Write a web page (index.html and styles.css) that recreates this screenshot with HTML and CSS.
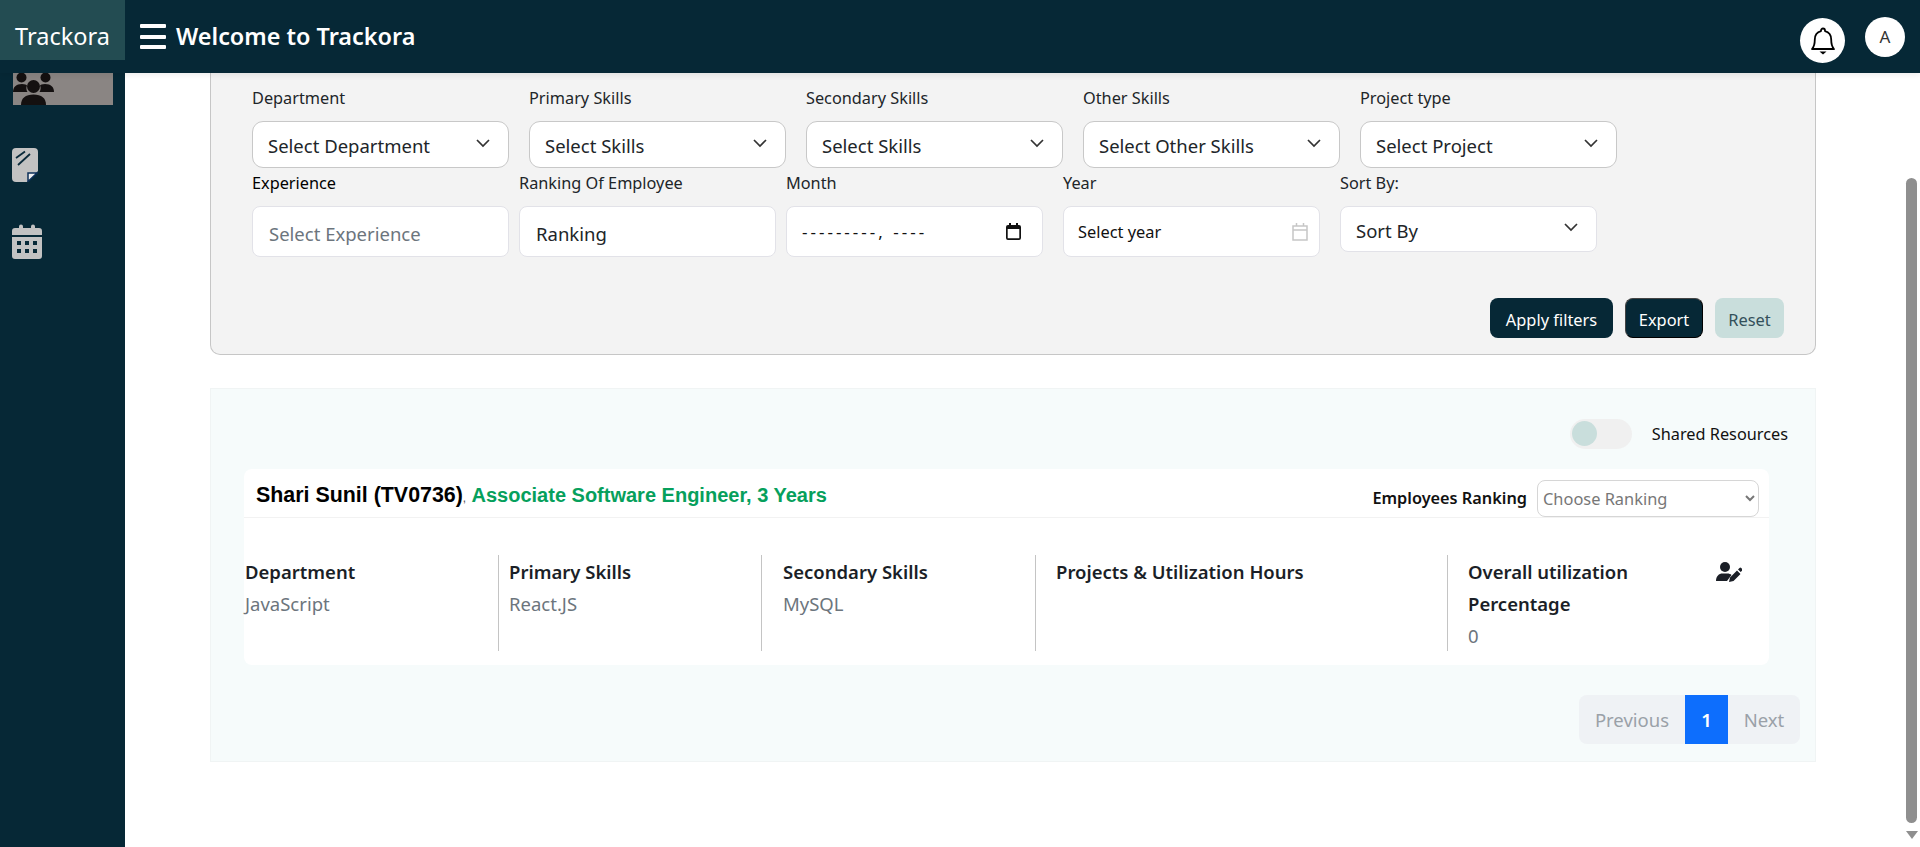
FILE: index.html
```html
<!DOCTYPE html>
<html>
	<head>
		<meta charset="utf-8">
		<title>Trackora</title>
		<link rel="stylesheet" href="styles.css">
	</head>
	<body>
		<div class="app">
			<!-- top bar -->
			<header class="topbar">
				<div class="brand">Trackora</div>
				<div class="hamburger"><span></span><span></span><span></span></div>
				<div class="welcome">Welcome to Trackora</div>
				<div class="bell">
					<svg width="26" height="30" viewBox="0 0 26 30"><path d="M13 2.500a2 2 0 0 1 2 2v.6c4 1 6.200 4.300 6.200 8.400 0 4.500.6 7.200 2.800 9.500H2c2.200-2.300 2.800-5 2.800-9.500 0-4.100 2.200-7.400 6.200-8.400v-.6a2 2 0 0 1 2-2z" fill="none" stroke="#000" stroke-width="1.800" stroke-linejoin="round"/><path d="M9.500 25.500h7L13 28.500z" fill="#000"/></svg>
				</div>
				<div class="avatar">A</div>
			</header>

			<div class="below">
				<!-- left menu -->
				<nav class="sidebar">
					<div class="nav-active">
						<svg width="42" height="32" viewBox="0 0 42 32" fill="#141010"><circle cx="8.500" cy="4.500" r="5"/><circle cx="32.500" cy="4.500" r="5"/><path d="M0 19c0-5 3-8 9-8 3 0 4.500.8 5 1.500-1 2-.8 4.500.5 6.500z"/><path d="M41 19c0-5-3-8-9-8-3 0-4.500.8-5 1.500 1 2 .8 4.500-.5 6.500z"/><circle cx="20.500" cy="13.500" r="6.500"/><path d="M8 32c0-7 4.500-10.500 12.500-10.500S33 25 33 32z"/></svg>
					</div>
					<div class="nav-doc">
						<svg width="26" height="34" viewBox="0 0 26 34"><path d="M4 0h18a4 4 0 0 1 4 4v19L15 34H4a4 4 0 0 1-4-4V4a4 4 0 0 1 4-4z" fill="#c2c2c2"/><path d="M16 33.500V25h9z" fill="#eee" stroke="#0b2f5a" stroke-width="1.500"/><path d="M4 10 13 3.500M6 17 18 6" stroke="#0a2a3a" stroke-width="1.800" fill="none"/></svg>
					</div>
					<div class="nav-cal">
						<svg width="30" height="35" viewBox="0 0 30 35" fill="#c2c2c2"><path d="M7 2.500a2 2 0 0 1 4 0V4h8V2.500a2 2 0 0 1 4 0V4h4a3 3 0 0 1 3 3v4H0V7a3 3 0 0 1 3-3h4z"/><path fill-rule="evenodd" d="M0 13h30v19a3 3 0 0 1-3 3H3a3 3 0 0 1-3-3zM5 17v4h4v-4zm8 0v4h4v-4zm8 0v4h4v-4zM5 25v4h4v-4zm8 0v4h4v-4zm8 0v4h4v-4z"/></svg>
					</div>
				</nav>

				<main class="content">
					<!-- filters -->
					<section class="filters">
						<div class="filter-row">
							<div class="field field-wide">
								<label>Department</label>
								<div class="pick">Select Department <svg class="chev" width="14" height="9" viewBox="0 0 14 9"><path d="M1 1l6 6 6-6" fill="none" stroke="#333" stroke-width="1.700"/></svg></div>
							</div>
							<div class="field field-wide">
								<label>Primary Skills</label>
								<div class="pick">Select Skills <svg class="chev" width="14" height="9" viewBox="0 0 14 9"><path d="M1 1l6 6 6-6" fill="none" stroke="#333" stroke-width="1.700"/></svg></div>
							</div>
							<div class="field field-wide">
								<label>Secondary Skills</label>
								<div class="pick">Select Skills <svg class="chev" width="14" height="9" viewBox="0 0 14 9"><path d="M1 1l6 6 6-6" fill="none" stroke="#333" stroke-width="1.700"/></svg></div>
							</div>
							<div class="field field-wide">
								<label>Other Skills</label>
								<div class="pick">Select Other Skills <svg class="chev" width="14" height="9" viewBox="0 0 14 9"><path d="M1 1l6 6 6-6" fill="none" stroke="#333" stroke-width="1.700"/></svg></div>
							</div>
							<div class="field">
								<label>Project type</label>
								<div class="pick">Select Project <svg class="chev" width="14" height="9" viewBox="0 0 14 9"><path d="M1 1l6 6 6-6" fill="none" stroke="#333" stroke-width="1.700"/></svg></div>
							</div>
						</div>
						<div class="filter-row filter-row-two">
							<div class="field field-near">
								<label class="label-dark">Experience</label>
								<input class="box" type="text" placeholder="Select Experience">
							</div>
							<div class="field field-near">
								<label>Ranking Of Employee</label>
								<input class="box" type="text" value="Ranking">
							</div>
							<div class="field field-wide">
								<label>Month</label>
								<div class="box box-month"><span class="month-text">---------, ----</span>
									<svg width="15" height="17" viewBox="0 0 15 17"><path d="M3 0h2v2h5V0h2v2h1a2 2 0 0 1 2 2v11a2 2 0 0 1-2 2H2a2 2 0 0 1-2-2V4a2 2 0 0 1 2-2h1zM1.700 6v9a.3.3 0 0 0 .3.3h11a.3.3 0 0 0 .3-.3V6z" fill="#111"/></svg>
								</div>
							</div>
							<div class="field field-wide">
								<label>Year</label>
								<div class="box box-year">Select year
									<svg width="16" height="18" viewBox="0 0 16 18" fill="none" stroke="#c6c6c6" stroke-width="1.500"><rect x="1" y="3" width="14" height="14"/><path d="M1 7h14M4.500 0v3M11.500 0v3"/></svg>
								</div>
							</div>
							<div class="field">
								<label>Sort By:</label>
								<div class="pick pick-sort">Sort By <svg class="chev" width="14" height="9" viewBox="0 0 14 9"><path d="M1 1l6 6 6-6" fill="none" stroke="#333" stroke-width="1.700"/></svg></div>
							</div>
						</div>
						<div class="filter-actions">
							<button class="btn btn-dark">Apply filters</button>
							<button class="btn btn-dark btn-export">Export</button>
							<button class="btn btn-reset">Reset</button>
						</div>
					</section>

					<!-- results -->
					<section class="results">
						<div class="shared">
							<div class="toggle"><span></span></div>
							<div>Shared Resources</div>
						</div>
						<div class="card">
							<div class="card-head">
								<div class="emp-name">Shari Sunil (TV0736)<span class="comma">, </span><span class="emp-role">Associate Software Engineer, 3 Years</span></div>
								<div class="emp-rank">
									<b>Employees Ranking</b>
									<select class="rank-select"><option>Choose Ranking</option></select>
								</div>
							</div>
							<div class="card-body">
								<div class="col col-1">
									<div class="col-title">Department</div>
									<div class="col-value">JavaScript</div>
								</div>
								<div class="col col-2">
									<div class="col-title">Primary Skills</div>
									<div class="col-value">React.JS</div>
								</div>
								<div class="col col-3">
									<div class="col-title">Secondary Skills</div>
									<div class="col-value">MySQL</div>
								</div>
								<div class="col col-4">
									<div class="col-title">Projects &amp; Utilization Hours</div>
								</div>
								<div class="col col-5">
									<div>
										<div class="col-title">Overall utilization Percentage</div>
										<div class="col-value">0</div>
									</div>
									<svg class="edit-user" width="26" height="20" viewBox="0 0 26 20" fill="#1b1f27"><circle cx="9" cy="5" r="5"/><path d="M0 19c0-5 3-7.500 6.500-7.500h5c1.500 0 3 .5 4 1.500L11 19z"/><path d="M13 20l1-4.500 7-7 3.500 3.500-7 7zM22 7.500l1.500-1.500a1.200 1.200 0 0 1 1.700 0l1 1a1.200 1.200 0 0 1 0 1.700L24.700 10z"/></svg>
								</div>
							</div>
						</div>
						<div class="pagination">
							<div class="page page-prev">Previous</div>
							<div class="page page-on">1</div>
							<div class="page page-next">Next</div>
						</div>
					</section>
				</main>

				<!-- page scrollbar -->
				<div class="scrollbar">
					<div class="scroll-thumb"></div>
					<div class="scroll-arrow"></div>
				</div>
			</div>
		</div>
	</body>
</html>
```

FILE: styles.css
```css
* {
	padding: 0;
	margin: 0;
	box-sizing: border-box;
}
body {
	font-family: "Noto Sans", "Open Sans", sans-serif;
	font-size: 16px;
	color: #212529;
	background-color: #ffffff;
}
.app {
	height: 847px;
	overflow: hidden;
	display: flex;
	flex-direction: column;
}

/* top bar */
.topbar {
	height: 73px;
	flex: none;
	background-color: #062836;
	display: flex;
	align-items: center;
	color: #ffffff;
	box-shadow: 0 2px 6px rgba(0, 0, 0, 0.08);
	position: relative;
	z-index: 2;
}
.brand {
	width: 125px;
	height: 60px;
	align-self: flex-start;
	background-color: #234c52;
	font-size: 23.500px;
	line-height: 72px;
	text-align: center;
}
.hamburger {
	width: 26px;
	margin-left: 15px;
	margin-right: 10px;
	display: flex;
	flex-direction: column;
	gap: 6.500px;
}
.hamburger span {
	height: 4px;
	background-color: #ffffff;
	border-radius: 1px;
}
.welcome {
	font-size: 23.400px;
	font-weight: 600;
	flex: 1;
	margin-bottom: 2px;
}
.bell {
	width: 45px;
	height: 45px;
	border-radius: 50%;
	background-color: #ffffff;
	display: flex;
	align-items: center;
	justify-content: center;
	margin-right: 20px;
	margin-top: 8px;
}
.avatar {
	width: 40px;
	height: 40px;
	border-radius: 50%;
	background-color: #ffffff;
	color: #333333;
	font-size: 17px;
	line-height: 40px;
	text-align: center;
	margin-right: 15px;
}

/* layout under the bar */
.below {
	flex: 1;
	display: flex;
	min-height: 0;
}
.sidebar {
	width: 125px;
	flex: none;
	background-color: #062836;
}
.nav-active {
	width: 100px;
	height: 32px;
	margin-left: 13px;
	background-color: #8a8583;
	overflow: hidden;
}
.nav-doc {
	margin: 43px 0 0 12px;
	height: 34px;
}
.nav-cal {
	margin: 42px 0 0 12px;
}
.content {
	flex: 1;
	min-width: 0;
	padding: 0 87px 0 85px;
}
.scrollbar {
	width: 17px;
	flex: none;
	background-color: #ffffff;
	padding-top: 105px;
	display: flex;
	flex-direction: column;
	align-items: center;
}
.scroll-thumb {
	width: 11px;
	height: 645px;
	background-color: #8f8f8f;
	border-radius: 6px;
}
.scroll-arrow {
	margin-top: 8px;
	border-left: 6px solid transparent;
	border-right: 6px solid transparent;
	border-top: 8px solid #8f8f8f;
}

/* filter panel */
.filters {
	background-color: #f3f3f3;
	border: 1px solid #c6c6c6;
	border-top: 0;
	border-radius: 0 0 10px 10px;
	padding: 13px 31px 16px 41px;
}
.filter-row {
	display: flex;
}
.filter-row-two {
	margin-top: 3px;
}
.field {
	width: 257px;
	flex: none;
}
.field-wide {
	margin-right: 20px;
}
.field-near {
	margin-right: 10px;
}
.field label {
	display: block;
	font-size: 16.300px;
	line-height: 24px;
	margin-bottom: 11px;
	color: #212529;
}
.field .label-dark {
	color: #000000;
}
.pick {
	height: 47px;
	background-color: #ffffff;
	border: 1px solid #c8c8c8;
	border-radius: 11px;
	padding: 2px 18px 0 15px;
	font-size: 18.500px;
	display: flex;
	align-items: center;
	justify-content: space-between;
}
.chev {
	margin-top: -5px;
}
.pick-sort {
	height: 46px;
	border-color: #e2e2e8;
	border-radius: 8px;
}
.box {
	display: block;
	width: 100%;
	height: 51px;
	background-color: #ffffff;
	border: 1px solid #e2e2e8;
	border-radius: 8px;
	padding: 3px 16px 0;
	font-family: inherit;
	font-size: 18.500px;
	color: #212529;
	outline: none;
}
.box::placeholder {
	color: #6c757d;
}
.box-month {
	font-size: 17px;
	color: #111111;
	display: flex;
	align-items: center;
	justify-content: space-between;
	padding: 0 21px 0 15px;
}
.month-text {
	letter-spacing: 3px;
}
.box-year {
	font-size: 16.400px;
	color: #111111;
	display: flex;
	align-items: center;
	justify-content: space-between;
	padding: 0 11px 0 14px;
}
.filter-actions {
	margin-top: 41px;
	display: flex;
	justify-content: flex-end;
	gap: 12px;
}
.btn {
	height: 40px;
	border: 0;
	border-radius: 8px;
	padding-top: 2px;
	font-family: inherit;
	font-size: 16.400px;
}
.btn-dark {
	width: 123px;
	background-color: #062836;
	color: #ffffff;
}
.btn-export {
	width: 78px;
	border: 1.500px solid #000000;
	border-top-color: #444444;
	border-left-color: #444444;
}
.btn-reset {
	width: 69px;
	background-color: #c9dedc;
	color: #33505a;
}

/* results */
.results {
	margin-top: 33px;
	background-color: #f6fbfb;
	border: 1px solid #f0f4f4;
	padding: 30px 15px 17px 33px;
}
.shared {
	display: flex;
	justify-content: flex-end;
	align-items: center;
	gap: 20px;
	padding-right: 12px;
	margin-bottom: 20px;
	font-size: 16.300px;
	color: #111111;
}
.toggle {
	width: 62px;
	height: 30px;
	border-radius: 15px;
	background-color: #f0f0f0;
	padding: 2px;
}
.toggle span {
	display: block;
	width: 25px;
	height: 25px;
	border-radius: 50%;
	background-color: #c9dedc;
}
.card {
	background-color: #ffffff;
	border-radius: 8px;
	margin-right: 31px;
	padding-bottom: 17px;
}
.card-head {
	height: 49px;
	border-bottom: 1px solid #f2f2f2;
	display: flex;
	justify-content: space-between;
	align-items: center;
	padding: 5px 10px 0 12px;
}
.emp-name {
	font-family: "Liberation Sans", Arial, sans-serif;
	font-weight: 700;
	font-size: 21.400px;
	color: #000000;
}
.comma {
	font-weight: 400;
	font-size: 12px;
	color: #555555;
}
.emp-role {
	font-size: 20px;
	color: #06a05c;
	margin-left: 2px;
}
.emp-rank {
	display: flex;
	align-items: center;
	gap: 10px;
	margin-top: 5px;
}
.emp-rank b {
	font-size: 16.300px;
	font-weight: 600;
	color: #111111;
}
.rank-select {
	width: 222px;
	height: 37px;
	background-color: #ffffff;
	border: 1px solid #d6d6d6;
	border-radius: 8px;
	font-family: inherit;
	font-size: 16.400px;
	color: #777777;
	padding-left: 1px;
}
.card-body {
	margin-top: 37px;
	height: 93px;
	display: grid;
	grid-template-columns: 255px 263px 274px 412px 1fr;
}
.col {
	padding-top: 1px;
	border-right: 1px solid #c4c4c4;
}
.col-1 {
	padding-left: 1px;
}
.col-2 {
	padding-left: 10px;
}
.col-3 {
	padding-left: 21px;
}
.col-4 {
	padding-left: 20px;
}
.col-5 {
	padding-left: 20px;
	padding-right: 27px;
	border-right: 0;
	display: flex;
	justify-content: space-between;
	align-items: flex-start;
}
.col-title {
	font-size: 18.500px;
	font-weight: 600;
	line-height: 32px;
	color: #1b1f27;
	max-width: 220px;
}
.col-4 .col-title {
	max-width: none;
}
.col-value {
	font-size: 18.500px;
	line-height: 31px;
	color: #6c757d;
}
.edit-user {
	margin-top: 6px;
}
.pagination {
	margin-top: 30px;
	display: flex;
	justify-content: flex-end;
}
.page {
	height: 49px;
	line-height: 49px;
	text-align: center;
	font-size: 18.500px;
	background-color: #eff2f5;
	color: #9aa1a8;
}
.page-prev {
	width: 106px;
	border-radius: 8px 0 0 8px;
}
.page-on {
	width: 43px;
	background-color: #0d6efd;
	color: #ffffff;
	font-weight: 600;
}
.page-next {
	width: 72px;
	border-radius: 0 8px 8px 0;
}
```
